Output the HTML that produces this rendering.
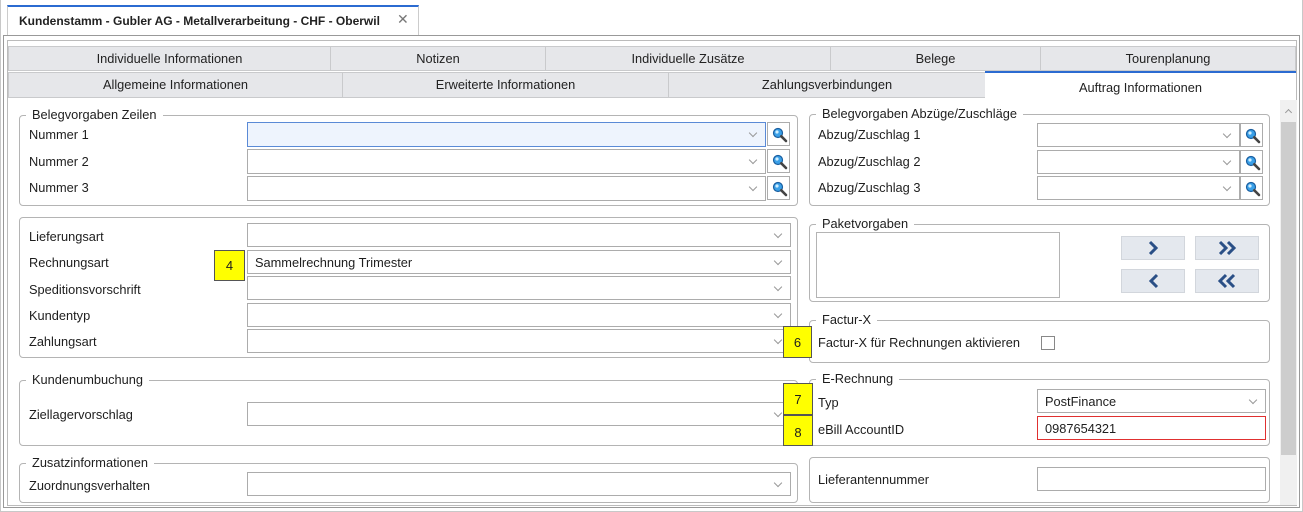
<!DOCTYPE html>
<html><head><meta charset="utf-8"><style>
*{box-sizing:border-box;margin:0;padding:0}
body{width:1303px;height:512px;background:#fff;font-family:"Liberation Sans",sans-serif;font-size:12px;color:#1e1e1e;position:relative;overflow:hidden}
.a{position:absolute}
.tab{position:absolute;background:#e6e7ea;border:1px solid #c9cacc;text-align:center;line-height:23px;font-size:12.8px;color:#222}
.grp{position:absolute;border:1px solid #b4b4b4;border-radius:4px}
.gt{position:absolute;background:#fff;padding:0 6px;font-size:12.8px;top:-9px;left:6px;line-height:16px}
.lbl{position:absolute;font-size:12.8px;line-height:16px}
.in{position:absolute;border:1px solid #acacac;background:#fff;font-size:12.8px;line-height:23px;padding-left:7px}
.dd::after{content:"";position:absolute;right:9px;top:7px;width:5px;height:5px;border-right:1px solid #999;border-bottom:1px solid #999;transform:rotate(45deg)}
.sb{position:absolute;width:23px;height:24px;border:1px solid #acacac;background:#fff}
.y{position:absolute;background:#ffff00;border:1px solid #555;text-align:center;font-size:13px}
.btn{position:absolute;background:#e4e8ee;border:1px solid #d2d6dc;width:64px;height:24px}
</style></head><body>
<div class="a" style="left:0;top:0;width:1303px;height:512px;border:1px solid #c8c8c8;border-top:none"></div>
<div class="a" style="left:7px;top:5px;width:412px;height:31px;border:1px solid #ccc;border-top:2px solid #2b6bd1;border-bottom:none;background:#fff"></div>
<div class="a" style="left:19px;top:14px;font-size:12px;font-weight:bold;color:#222">Kundenstamm - Gubler AG - Metallverarbeitung - CHF - Oberwil</div>
<div class="a" style="left:397px;top:11px;font-size:14px;color:#777">✕</div>
<div class="a" style="left:3px;top:35px;width:1297px;height:473px;border:1px solid #999"></div>
<div class="a" style="left:7px;top:40px;width:1290px;height:466px;border:1px solid #bbb"></div>
<div class="tab" style="left:8px;top:46px;width:323px;height:25px">Individuelle Informationen</div>
<div class="tab" style="left:330px;top:46px;width:216px;height:25px">Notizen</div>
<div class="tab" style="left:545px;top:46px;width:286px;height:25px">Individuelle Zusätze</div>
<div class="tab" style="left:830px;top:46px;width:211px;height:25px">Belege</div>
<div class="tab" style="left:1040px;top:46px;width:256px;height:25px">Tourenplanung</div>
<div class="tab" style="left:8px;top:72px;width:335px;height:26px">Allgemeine Informationen</div>
<div class="tab" style="left:342px;top:72px;width:327px;height:26px">Erweiterte Informationen</div>
<div class="tab" style="left:668px;top:72px;width:318px;height:26px">Zahlungsverbindungen</div>
<div class="tab" style="left:985px;top:71px;width:311px;height:28px;background:#fff;border:none;border-top:2px solid #2b6bd1;line-height:29px">Auftrag Informationen</div>
<div class="a" style="left:1280px;top:100px;width:17px;height:405px;background:#f0f0f0"></div>
<div class="a" style="left:1286px;top:110px;width:5px;height:5px;border-left:1px solid #999;border-top:1px solid #999;transform:rotate(45deg)"></div>
<div class="a" style="left:1281px;top:122px;width:15px;height:333px;background:#cdcdcd"></div>

<div class="grp" style="left:19px;top:115px;width:779px;height:91px"><span class="gt">Belegvorgaben Zeilen</span></div>
<div class="lbl" style="left:29px;top:127px">Nummer 1</div>
<div class="lbl" style="left:29px;top:154px">Nummer 2</div>
<div class="lbl" style="left:29px;top:180px">Nummer 3</div>
<div class="in dd" style="left:247px;top:122px;width:519px;height:25px;border-color:#5a8ad6;background:#eef4fd"></div>
<div class="in dd" style="left:247px;top:149px;width:519px;height:25px"></div>
<div class="in dd" style="left:247px;top:176px;width:519px;height:25px"></div>
<div class="sb" style="left:767px;top:122px"></div><div class="sb" style="left:767px;top:149px"></div><div class="sb" style="left:767px;top:176px"></div>

<div class="grp" style="left:19px;top:217px;width:779px;height:141px"></div>
<div class="lbl" style="left:29px;top:229px">Lieferungsart</div>
<div class="lbl" style="left:29px;top:255px">Rechnungsart</div>
<div class="lbl" style="left:29px;top:282px">Speditionsvorschrift</div>
<div class="lbl" style="left:29px;top:308px">Kundentyp</div>
<div class="lbl" style="left:29px;top:334px">Zahlungsart</div>
<div class="in dd" style="left:247px;top:223px;width:544px;height:24px"></div>
<div class="in dd" style="left:247px;top:250px;width:544px;height:24px">Sammelrechnung Trimester</div>
<div class="in dd" style="left:247px;top:276px;width:544px;height:24px"></div>
<div class="in dd" style="left:247px;top:303px;width:544px;height:24px"></div>
<div class="in dd" style="left:247px;top:329px;width:544px;height:24px"></div>
<div class="y" style="left:214px;top:250px;width:31px;height:31px;line-height:29px">4</div>

<div class="grp" style="left:19px;top:380px;width:779px;height:66px"><span class="gt">Kundenumbuchung</span></div>
<div class="lbl" style="left:29px;top:407px">Ziellagervorschlag</div>
<div class="in dd" style="left:247px;top:402px;width:544px;height:24px"></div>

<div class="grp" style="left:19px;top:463px;width:779px;height:40px"><span class="gt">Zusatzinformationen</span></div>
<div class="lbl" style="left:29px;top:478px">Zuordnungsverhalten</div>
<div class="in dd" style="left:247px;top:472px;width:544px;height:24px"></div>

<div class="grp" style="left:809px;top:114px;width:461px;height:92px"><span class="gt">Belegvorgaben Abzüge/Zuschläge</span></div>
<div class="lbl" style="left:818px;top:127px">Abzug/Zuschlag 1</div>
<div class="lbl" style="left:818px;top:154px">Abzug/Zuschlag 2</div>
<div class="lbl" style="left:818px;top:180px">Abzug/Zuschlag 3</div>
<div class="in dd" style="left:1037px;top:123px;width:203px;height:24px"></div>
<div class="in dd" style="left:1037px;top:150px;width:203px;height:24px"></div>
<div class="in dd" style="left:1037px;top:176px;width:203px;height:24px"></div>
<div class="sb" style="left:1240px;top:123px"></div><div class="sb" style="left:1240px;top:150px"></div><div class="sb" style="left:1240px;top:176px"></div>

<div class="grp" style="left:809px;top:224px;width:461px;height:78px"><span class="gt">Paketvorgaben</span></div>
<div class="a" style="left:816px;top:232px;width:244px;height:66px;border:1px solid #b4b4b4"></div>
<div class="btn" style="left:1121px;top:236px"></div><div class="btn" style="left:1195px;top:236px"></div>
<div class="btn" style="left:1121px;top:269px"></div><div class="btn" style="left:1195px;top:269px"></div>

<div class="grp" style="left:809px;top:320px;width:461px;height:43px"><span class="gt">Factur-X</span></div>
<div class="lbl" style="left:818px;top:335px">Factur-X für Rechnungen aktivieren</div>
<div class="a" style="left:1041px;top:336px;width:14px;height:14px;border:1px solid #888;background:#fff"></div>
<div class="y" style="left:783px;top:326px;width:29px;height:32px;line-height:32px">6</div>

<div class="grp" style="left:809px;top:379px;width:461px;height:67px"><span class="gt">E-Rechnung</span></div>
<div class="lbl" style="left:818px;top:395px">Typ</div>
<div class="lbl" style="left:818px;top:422px">eBill AccountID</div>
<div class="in dd" style="left:1037px;top:389px;width:229px;height:24px">PostFinance</div>
<div class="in" style="left:1037px;top:416px;width:229px;height:24px;border-color:#e03030">0987654321</div>
<div class="y" style="left:783px;top:383px;width:30px;height:32px;line-height:32px">7</div>
<div class="y" style="left:783px;top:415px;width:30px;height:31px;line-height:33px">8</div>

<div class="grp" style="left:809px;top:457px;width:461px;height:46px"></div>
<div class="lbl" style="left:818px;top:472px">Lieferantennummer</div>
<div class="in" style="left:1037px;top:467px;width:229px;height:24px"></div>

<svg class="a" style="left:0;top:0" width="1303" height="512">
<defs><g id="mg"><circle cx="9" cy="9" r="4.5" fill="#3aa0e8" stroke="#1a5fa0" stroke-width="1.2"/><circle cx="8" cy="8" r="1.6" fill="#cfeeff"/><path d="M12.3 12.3 L17 17" stroke="#444" stroke-width="2.6" stroke-linecap="round"/></g></defs>
<use href="#mg" x="769" y="124"/><use href="#mg" x="769" y="151"/><use href="#mg" x="769" y="178"/>
<use href="#mg" x="1242" y="125"/><use href="#mg" x="1242" y="152"/><use href="#mg" x="1242" y="178"/>
<g fill="none" stroke="#2a4f86" stroke-width="3">
<path d="M1150 242 L1156 248 L1150 254"/>
<path d="M1220 242 L1226 248 L1220 254"/><path d="M1228 242 L1234 248 L1228 254"/>
<path d="M1157 275 L1151 281 L1157 287"/>
<path d="M1226 275 L1220 281 L1226 287"/><path d="M1234 275 L1228 281 L1234 287"/>
</g>
</svg>
</body></html>
